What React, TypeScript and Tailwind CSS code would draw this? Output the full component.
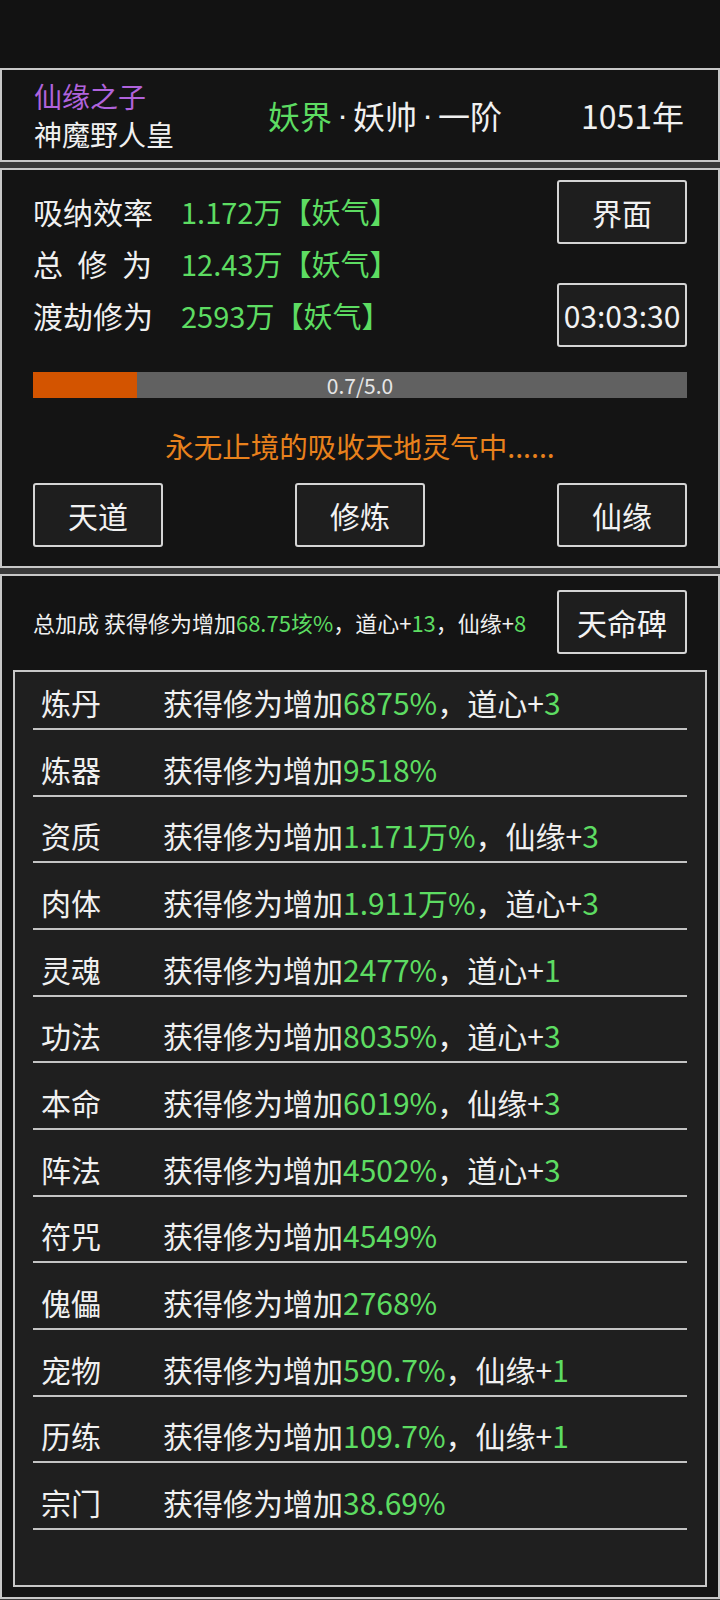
import React from "react";

const G = "text-[#5ddc62]";

type Row = { label: string; value: string; extra?: [string, string] };

const rows: Row[] = [
  { label: "炼丹", value: "6875%", extra: ["道心+", "3"] },
  { label: "炼器", value: "9518%" },
  { label: "资质", value: "1.171万%", extra: ["仙缘+", "3"] },
  { label: "肉体", value: "1.911万%", extra: ["道心+", "3"] },
  { label: "灵魂", value: "2477%", extra: ["道心+", "1"] },
  { label: "功法", value: "8035%", extra: ["道心+", "3"] },
  { label: "本命", value: "6019%", extra: ["仙缘+", "3"] },
  { label: "阵法", value: "4502%", extra: ["道心+", "3"] },
  { label: "符咒", value: "4549%" },
  { label: "傀儡", value: "2768%" },
  { label: "宠物", value: "590.7%", extra: ["仙缘+", "1"] },
  { label: "历练", value: "109.7%", extra: ["仙缘+", "1"] },
  { label: "宗门", value: "38.69%" },
];

function Btn({ children, className = "" }: { children: React.ReactNode; className?: string }) {
  return (
    <div
      className={
        "w-[130px] h-[64px] border-2 border-[#d4d4d4] rounded-[3px] bg-[#1e1e1e] flex items-center justify-center leading-none text-[#f2f2f2] " +
        className
      }
    >
      {children}
    </div>
  );
}

function Dot() {
  return <span className="inline-block w-[21px] text-center font-['Liberation_Sans',sans-serif]">·</span>;
}

export default function App() {
  return (
    <div className="w-[720px] h-[1600px] bg-[#3a3a3a] font-['Noto_Sans_CJK_SC',sans-serif] text-[#f0f0f0] flex flex-col overflow-hidden">
      <div className="h-[68px] bg-[#121212] shrink-0" />

      {/* Header */}
      <div className="h-[94px] shrink-0 border-2 border-[#c8c8c8] bg-[#141414] flex items-center">
        <div className="pl-[32px] w-[266px] flex flex-col self-start pt-[7px]">
          <div className="text-[28px] leading-[38px] text-[#b063dc]">仙缘之子</div>
          <div className="text-[28px] leading-[38px]">神魔野人皇</div>
        </div>
        <div className="w-[313px] text-[32px] leading-none flex items-center">
          <span className="text-[#5ddc62]">妖界</span>
          <Dot />
          <span>妖帅</span>
          <Dot />
          <span>一阶</span>
        </div>
        <div className="text-[32px] leading-none">1051年</div>
      </div>

      <div className="h-[6px] shrink-0" />

      {/* Panel 2 */}
      <div className="h-[400px] shrink-0 border-2 border-[#c8c8c8] bg-[#141414] px-[31px] flex flex-col">
        <div className="h-[202px] flex justify-between">
          <div className="pt-[15px] text-[30px] leading-[52px]">
            <div className="flex items-center">
              <span className="w-[148px]">吸纳效率</span>
              <span className={G + " text-[29px]"}>1.172万【妖气】</span>
            </div>
            <div className="flex items-center">
              <span className="w-[148px] flex">
                <span className="w-[119px] flex justify-between">
                  <span>总</span>
                  <span>修</span>
                  <span>为</span>
                </span>
              </span>
              <span className={G + " text-[29px]"}>12.43万【妖气】</span>
            </div>
            <div className="flex items-center">
              <span className="w-[148px]">渡劫修为</span>
              <span className={G + " text-[29px]"}>2593万【妖气】</span>
            </div>
          </div>
          <div className="pt-[10px] flex flex-col gap-[39px]">
            <Btn className="text-[30px]">界面</Btn>
            <Btn className="text-[30px]">03:03:30</Btn>
          </div>
        </div>

        <div className="relative h-[26px] bg-[#616161]">
          <div className="absolute left-0 top-0 h-full w-[104px] bg-[#d35400]" />
          <div className="absolute inset-0 flex items-center justify-center text-[21px] leading-none text-[#e6e6e6]">
            0.7/5.0
          </div>
        </div>

        <div className="mt-[28px] text-center text-[28.5px] leading-[40px] text-[#e8811c]">
          永无止境的吸收天地灵气中......
        </div>

        <div className="mt-[17px] flex justify-between">
          <Btn className="text-[30px]">天道</Btn>
          <Btn className="text-[30px]">修炼</Btn>
          <Btn className="text-[30px]">仙缘</Btn>
        </div>
      </div>

      <div className="h-[6px] shrink-0" />

      {/* Panel 3 */}
      <div className="h-[1025px] shrink-0 border-2 border-[#c8c8c8] bg-[#141414] flex flex-col">
        <div className="px-[31px] pt-[14px] flex justify-between items-center">
          <div className="text-[22px] leading-none">
            总加成 获得修为增加<span className={G}>68.75垓%</span>，道心+<span className={G}>13</span>，仙缘+<span className={G}>8</span>
          </div>
          <Btn className="text-[30px]">天命碑</Btn>
        </div>

        <div className="mx-[11px] mt-[16px] h-[917px] border-2 border-[#c8c8c8] bg-[#1f1f1f] px-[18px]">
          {rows.map((r, i) => (
            <div
              key={r.label}
              className={
                "flex items-end border-b-2 border-[#c4c4c4] pb-[8px] text-[30px] leading-[36px] " +
                (i === 0 ? "h-[58px]" : "h-[66.67px]")
              }
            >
              <span className="w-[130px] pl-[8px]">{r.label}</span>
              <span>
                获得修为增加<span className={G}>{r.value}</span>
                {r.extra && (
                  <>
                    ，{r.extra[0]}
                    <span className={G}>{r.extra[1]}</span>
                  </>
                )}
              </span>
            </div>
          ))}
        </div>
      </div>
    </div>
  );
}
